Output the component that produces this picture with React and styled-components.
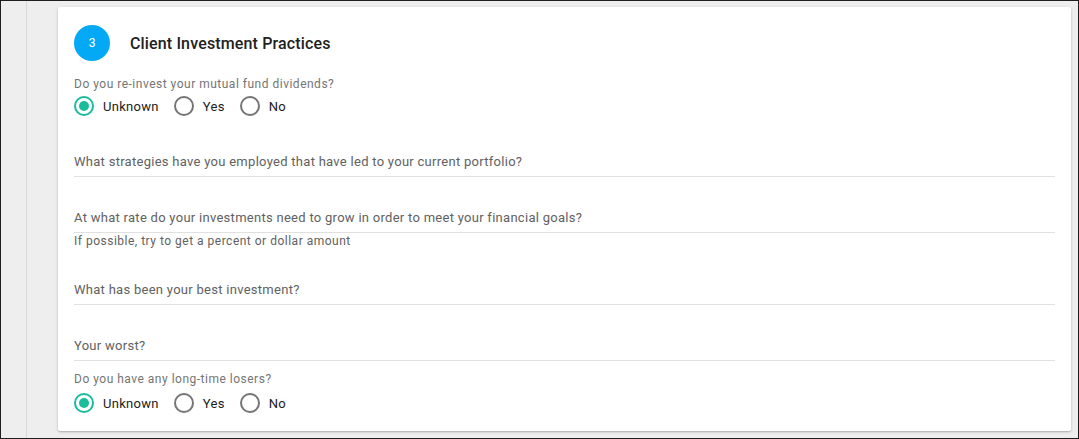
import React from 'react'
import styled, { createGlobalStyle } from 'styled-components'

const Global = createGlobalStyle`
  html, body { margin: 0; padding: 0; background: #eeeeee; }
  body { font-family: Roboto, "Liberation Sans", Arial, sans-serif; }
`

const Frame = styled.div`
  box-sizing: border-box;
  width: 1079px;
  height: 439px;
  border: 1px solid #1e1e1e;
  background: #eeeeee;
  display: flex;
  overflow: hidden;
`

const Rail = styled.div`
  width: 25px;
  flex: none;
  border-right: 1px solid #d8d8d8;
`

const Main = styled.div`
  flex: 1;
  padding: 6px 7px 0 31px;
`

const Card = styled.section`
  background: #fff;
  border-radius: 2px;
  box-shadow: 0 1px 3px rgba(0, 0, 0, 0.22), 0 1px 1px rgba(0, 0, 0, 0.08);
  padding: 18px 16px 18px 16px;
`

const Header = styled.div`
  display: flex;
  align-items: center;
  height: 36px;
`

const Step = styled.div`
  width: 36px;
  height: 36px;
  border-radius: 50%;
  background: #03a9f4;
  color: #fff;
  font-size: 12px;
  display: flex;
  align-items: center;
  justify-content: center;
`

const Title = styled.h2`
  margin: 0 0 0 20px;
  font-size: 16px;
  font-weight: 500;
  letter-spacing: 0.15px;
  color: #212121;
`

const Question = styled.div`
  margin-top: ${p => p.$top}px;
  font-size: 12px;
  line-height: 14px;
  letter-spacing: 0.5px;
  color: #757575;
`

const RadioRow = styled.div`
  display: flex;
  align-items: center;
  height: 20px;
  margin-top: ${p => p.$top}px;
`

const Option = styled.label`
  display: flex;
  align-items: center;
  margin-right: 15px;
  font-size: 13px;
  letter-spacing: 0.3px;
  color: #212121;
`

const Ring = styled.span`
  box-sizing: border-box;
  width: 20px;
  height: 20px;
  border-radius: 50%;
  border: 2px solid ${p => (p.$on ? '#1abc9c' : '#757575')};
  display: flex;
  align-items: center;
  justify-content: center;
  margin-right: 9px;
  &::after {
    content: '';
    width: 10px;
    height: 10px;
    border-radius: 50%;
    background: ${p => (p.$on ? '#1abc9c' : 'transparent')};
  }
`

const Field = styled.div`
  box-sizing: border-box;
  height: 56px;
  padding-top: 33px;
  border-bottom: 1px solid #e0e0e0;
  margin-top: ${p => p.$top || 0}px;
`

const FieldLabel = styled.div`
  font-size: 13px;
  line-height: 16px;
  letter-spacing: 0.28px;
  color: #616161;
`

const Hint = styled.div`
  height: 16px;
  font-size: 12px;
  line-height: 16px;
  letter-spacing: 0.5px;
  color: #616161;
`

const Radios = ({ top }) => (
  <RadioRow $top={top}>
    <Option><Ring $on />Unknown</Option>
    <Option><Ring />Yes</Option>
    <Option><Ring />No</Option>
  </RadioRow>
)

export default function App() {
  return (
    <>
      <Global />
      <Frame>
        <Rail />
        <Main>
          <Card>
            <Header>
              <Step>3</Step>
              <Title>Client Investment Practices</Title>
            </Header>
            <Question $top={16}>Do you re-invest your mutual fund dividends?</Question>
            <Radios top={5} />
            <Field $top={5}>
              <FieldLabel>What strategies have you employed that have led to your current portfolio?</FieldLabel>
            </Field>
            <Field>
              <FieldLabel>At what rate do your investments need to grow in order to meet your financial goals?</FieldLabel>
            </Field>
            <Hint>If possible, try to get a percent or dollar amount</Hint>
            <Field>
              <FieldLabel>What has been your best investment?</FieldLabel>
            </Field>
            <Field>
              <FieldLabel>Your worst?</FieldLabel>
            </Field>
            <Question $top={11}>Do you have any long-time losers?</Question>
            <Radios top={7} />
          </Card>
        </Main>
      </Frame>
    </>
  )
}
